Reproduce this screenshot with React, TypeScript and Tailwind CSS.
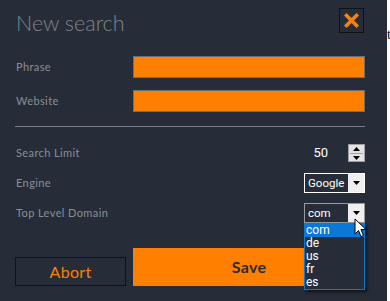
import React from "react";

const Cursor = () => (
  <svg width="14" height="20" viewBox="0 0 14 20" className="absolute left-[354px] top-[218px] z-20">
    <path d="M1 1 L1 16 L4.5 12.5 L7 18.5 L9.5 17.5 L7 11.5 L12 11.5 Z" fill="#fff" stroke="#000" strokeWidth="1" strokeLinejoin="miter" />
  </svg>
);

const Down = () => (
  <svg width="7" height="4" viewBox="0 0 7 4"><path d="M0 0 L7 0 L3.5 4 Z" fill="#000" /></svg>
);

export default function App() {
  const ff = { fontFamily: "Lato, 'DejaVu Sans', sans-serif" };
  const sys = { fontFamily: "Roboto, 'Liberation Sans', sans-serif" };
  const label = "text-[11px] tracking-[0.4px] text-[#8a8f95]";
  return (
    <div className="w-[390px] h-[301px] bg-white flex overflow-hidden">
      <div className="relative w-[387px] h-[301px] bg-[#262d38] shrink-0" style={ff}>
        <div className="flex items-start justify-between pl-[16px] pr-[23px] pt-[8px]">
          <div className="text-[21.5px] leading-[26px] text-[#7f848a] font-light mt-[2px]">New search</div>
          <div className="w-[25px] h-[25px] border border-[#111] flex items-center justify-center">
            <svg width="15" height="15" viewBox="0 0 15 15">
              <path d="M2.5 2.5 L12.5 12.5 M12.5 2.5 L2.5 12.5" stroke="#ff7f00" strokeWidth="3.6" strokeLinecap="square" />
            </svg>
          </div>
        </div>
        <div className="pl-[16px] pr-[22px] mt-[20px] flex flex-col gap-[12px]">
          <div className="flex items-center h-[22px]">
            <div className={`w-[117px] ${label}`}>Phrase</div>
            <div className="flex-1 h-[22px] bg-[#ff7f00] border border-[#6b6f74]" />
          </div>
          <div className="flex items-center h-[22px]">
            <div className={`w-[117px] ${label}`}>Website</div>
            <div className="flex-1 h-[22px] bg-[#ff7f00] border border-[#6b6f74]" />
          </div>
        </div>
        <div className="ml-[15px] mr-[22px] mt-[14px] h-px bg-[#7a7e84]" />
        <div className="pl-[16px] pr-[22px] mt-[16px] flex flex-col gap-[10px]">
          <div className="flex items-center h-[20px]">
            <div className={`flex-1 ${label}`}>Search Limit</div>
            <div className="text-[13px] text-white mr-[20px]" style={sys}>50</div>
            <div className="w-[17px] h-[18px] bg-[#e3e3e3] border border-[#a0a0a0] flex flex-col items-center justify-center gap-[2px]">
              <svg width="7" height="4" viewBox="0 0 7 4"><path d="M3.5 0 L7 4 L0 4 Z" fill="#000" /></svg>
              <div className="w-[13px] h-px bg-[#a0a0a0]" />
              <Down />
            </div>
          </div>
          <div className="flex items-center h-[20px]">
            <div className={`flex-1 ${label}`}>Engine</div>
            <div className="w-[61px] h-[20px] border border-white flex" style={sys}>
              <div className="flex-1 text-[11.5px] leading-[18px] text-white pl-[3px]">Google</div>
              <div className="w-[16px] bg-[#efefef] flex items-center justify-center">
                <Down />
              </div>
            </div>
          </div>
          <div className="flex items-center h-[20px]">
            <div className={`flex-1 ${label}`}>Top Level Domain</div>
            <div className="relative w-[61px] h-[20px] border border-[#9a9a9a] flex" style={sys}>
              <div className="flex-1 text-[11.5px] leading-[18px] text-white pl-[3px]">com</div>
              <div className="w-[16px] bg-[#efefef] flex items-center justify-center">
                <Down />
              </div>
              <div className="absolute left-[-1px] top-[19px] w-[61px] border border-[#0a78d7] bg-[#262d38] shadow-[2px_2px_3px_rgba(0,0,0,0.6)] z-10 text-[12px] leading-[13px] text-white">
                <div className="bg-[#0a78d7] pl-[1px]">com</div>
                <div className="pl-[1px]">de</div>
                <div className="pl-[1px]">us</div>
                <div className="pl-[1px]">fr</div>
                <div className="pl-[1px]">es</div>
              </div>
            </div>
          </div>
        </div>
        <div className="pl-[15px] pr-[22px] mt-[25px] flex items-end gap-[7px]">
          <div className="w-[111px] h-[29px] border border-[#111] flex items-center justify-center text-[16px] tracking-[0.3px] text-[#ff7f00]">Abort</div>
          <div className="flex-1 h-[38px] bg-[#ff7f00] flex items-center justify-center text-[16px] font-bold tracking-[0.3px] text-[#2b2b2b]">Save</div>
        </div>
        <Cursor />
      </div>
      <div className="flex-1 relative">
        <div className="absolute left-0 top-[24px] text-[14px] text-black" style={{ fontFamily: "'Liberation Serif', serif" }}>t</div>
      </div>
    </div>
  );
}
